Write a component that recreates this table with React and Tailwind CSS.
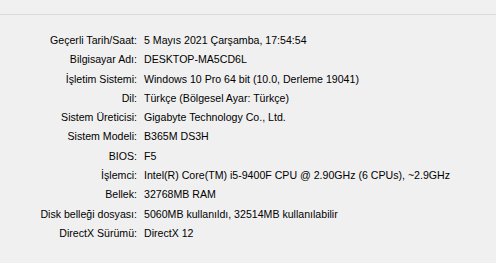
const rows = [
  ['Geçerli Tarih/Saat:', '5 Mayıs 2021 Çarşamba, 17:54:54'],
  ['Bilgisayar Adı:', 'DESKTOP-MA5CD6L'],
  ['İşletim Sistemi:', 'Windows 10 Pro 64 bit (10.0, Derleme 19041)'],
  ['Dil:', 'Türkçe (Bölgesel Ayar: Türkçe)'],
  ['Sistem Üreticisi:', 'Gigabyte Technology Co., Ltd.'],
  ['Sistem Modeli:', 'B365M DS3H'],
  ['BIOS:', 'F5'],
  ['İşlemci:', 'Intel(R) Core(TM) i5-9400F CPU @ 2.90GHz (6 CPUs), ~2.9GHz'],
  ['Bellek:', '32768MB RAM'],
  ['Disk belleği dosyası:', '5060MB kullanıldı, 32514MB kullanılabilir'],
  ['DirectX Sürümü:', 'DirectX 12'],
]

export default function App() {
  return (
    <div className="w-[496px] h-[263px] overflow-hidden bg-[#f0f0f0] text-black text-[10.6px] font-['Liberation_Sans',Arial,sans-serif]">
      {/* top divider */}
      <div className="h-[14px]" />
      <div className="h-px bg-[#dadada]" />

      <div className="pt-[16px] grid grid-cols-[137px_1fr] gap-x-[7px] auto-rows-[19.3px] leading-[19.3px]">
        {rows.map(([label, value]) => (
          <div key={label} className="contents">
            <div className="text-right whitespace-nowrap">{label}</div>
            <div className="whitespace-nowrap">{value}</div>
          </div>
        ))}
      </div>
    </div>
  )
}
